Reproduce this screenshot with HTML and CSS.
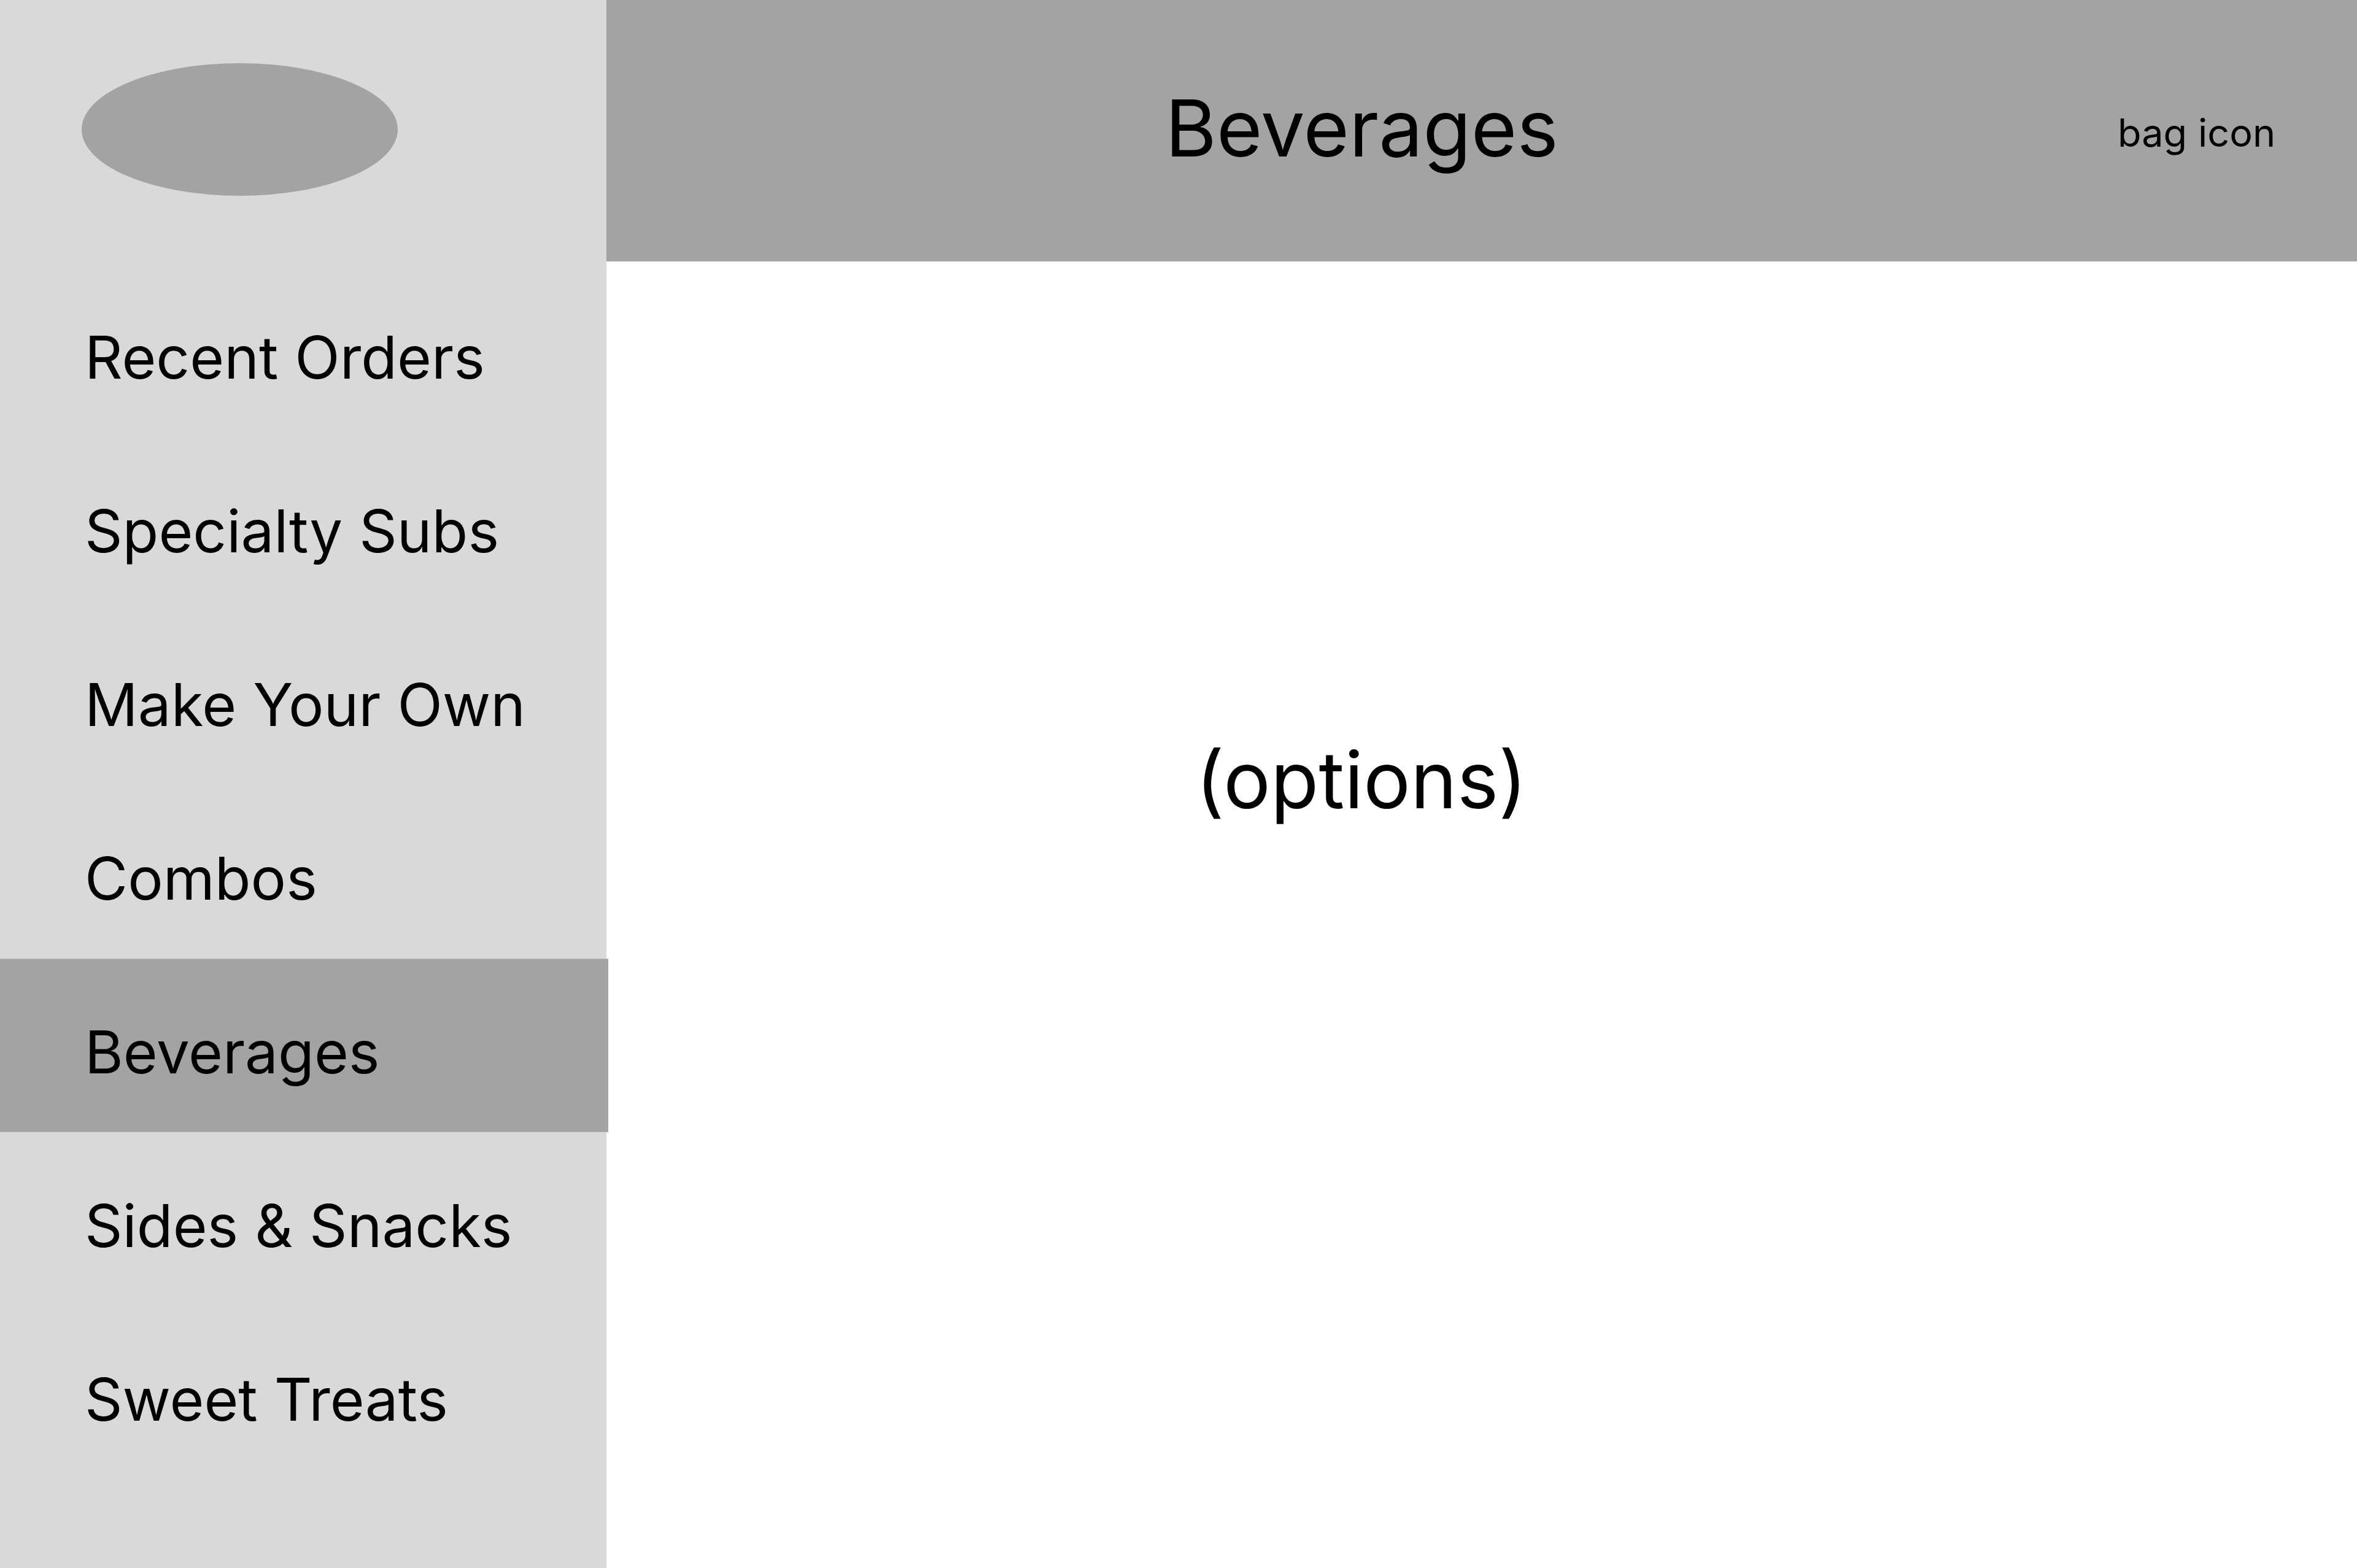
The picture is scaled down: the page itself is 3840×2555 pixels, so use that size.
FILE: index.html
```html
<!DOCTYPE html>
<html lang="en">
<head>
<meta charset="utf-8">
<title>Beverages</title>
<link rel="stylesheet" href="styles.css">
</head>
<body>
<div class="app">
  <aside class="sidebar">
    <div class="logo"></div>
    <nav class="nav">
      <div class="nav-item">Recent Orders</div>
      <div class="nav-item">Specialty Subs</div>
      <div class="nav-item">Make Your Own</div>
      <div class="nav-item">Combos</div>
      <div class="nav-item active">Beverages</div>
      <div class="nav-item">Sides &amp; Snacks</div>
      <div class="nav-item">Sweet Treats</div>
    </nav>
  </aside>
  <main class="main">
    <header class="header">
      <div class="title">Beverages</div>
      <div class="bag">bag icon</div>
    </header>
    <section class="content">
      <div class="options">(options)</div>
      <div class="spacer"></div>
    </section>
  </main>
</div>
</body>
</html>
```

FILE: styles.css
```css
html, body {
  margin: 0;
  padding: 0;
  background: #ffffff;
}
body {
  font-family: Inter, "Noto Sans", sans-serif;
  color: #000000;
}
.app {
  display: flex;
  width: 3840px;
  height: 2555px;
  overflow: hidden;
}
.sidebar {
  width: 988px;
  flex: 0 0 988px;
  background: #d9d9d9;
  padding-top: 103px;
  box-sizing: border-box;
  display: flex;
  flex-direction: column;
}
.logo {
  width: 515px;
  height: 216px;
  margin-left: 133px;
  border-radius: 50%;
  background: #a3a3a3;
}
.nav {
  margin-top: 111px;
  display: flex;
  flex-direction: column;
}
.nav-item {
  height: 283px;
  box-sizing: border-box;
  display: flex;
  align-items: center;
  padding-top: 21px;
  padding-left: 138px;
  font-size: 96px;
  white-space: nowrap;
}
.nav-item.active {
  background: #a3a3a3;
  margin-right: -3px;
  position: relative;
  z-index: 1;
  border-top: 1px solid #b8b8b8;
  border-bottom: 1px solid #b8b8b8;
}
.main {
  flex: 1;
  display: flex;
  flex-direction: column;
}
.header {
  height: 426px;
  background: #a3a3a3;
  display: flex;
  align-items: center;
  border-left: 1px solid #999999;
  box-sizing: border-box;
}
.title {
  flex: 1;
  text-align: center;
  font-size: 128px;
  padding-bottom: 10px;
}
.bag {
  width: 392px;
  flex: 0 0 392px;
  font-size: 63px;
  padding-left: 2px;
  box-sizing: border-box;
  padding-top: 5px;
}
.content {
  flex: 1;
  display: flex;
  padding-top: 767px;
}
.options {
  flex: 1;
  text-align: center;
  font-size: 128px;
  line-height: normal;
}
.spacer {
  width: 392px;
  flex: 0 0 392px;
}
```
